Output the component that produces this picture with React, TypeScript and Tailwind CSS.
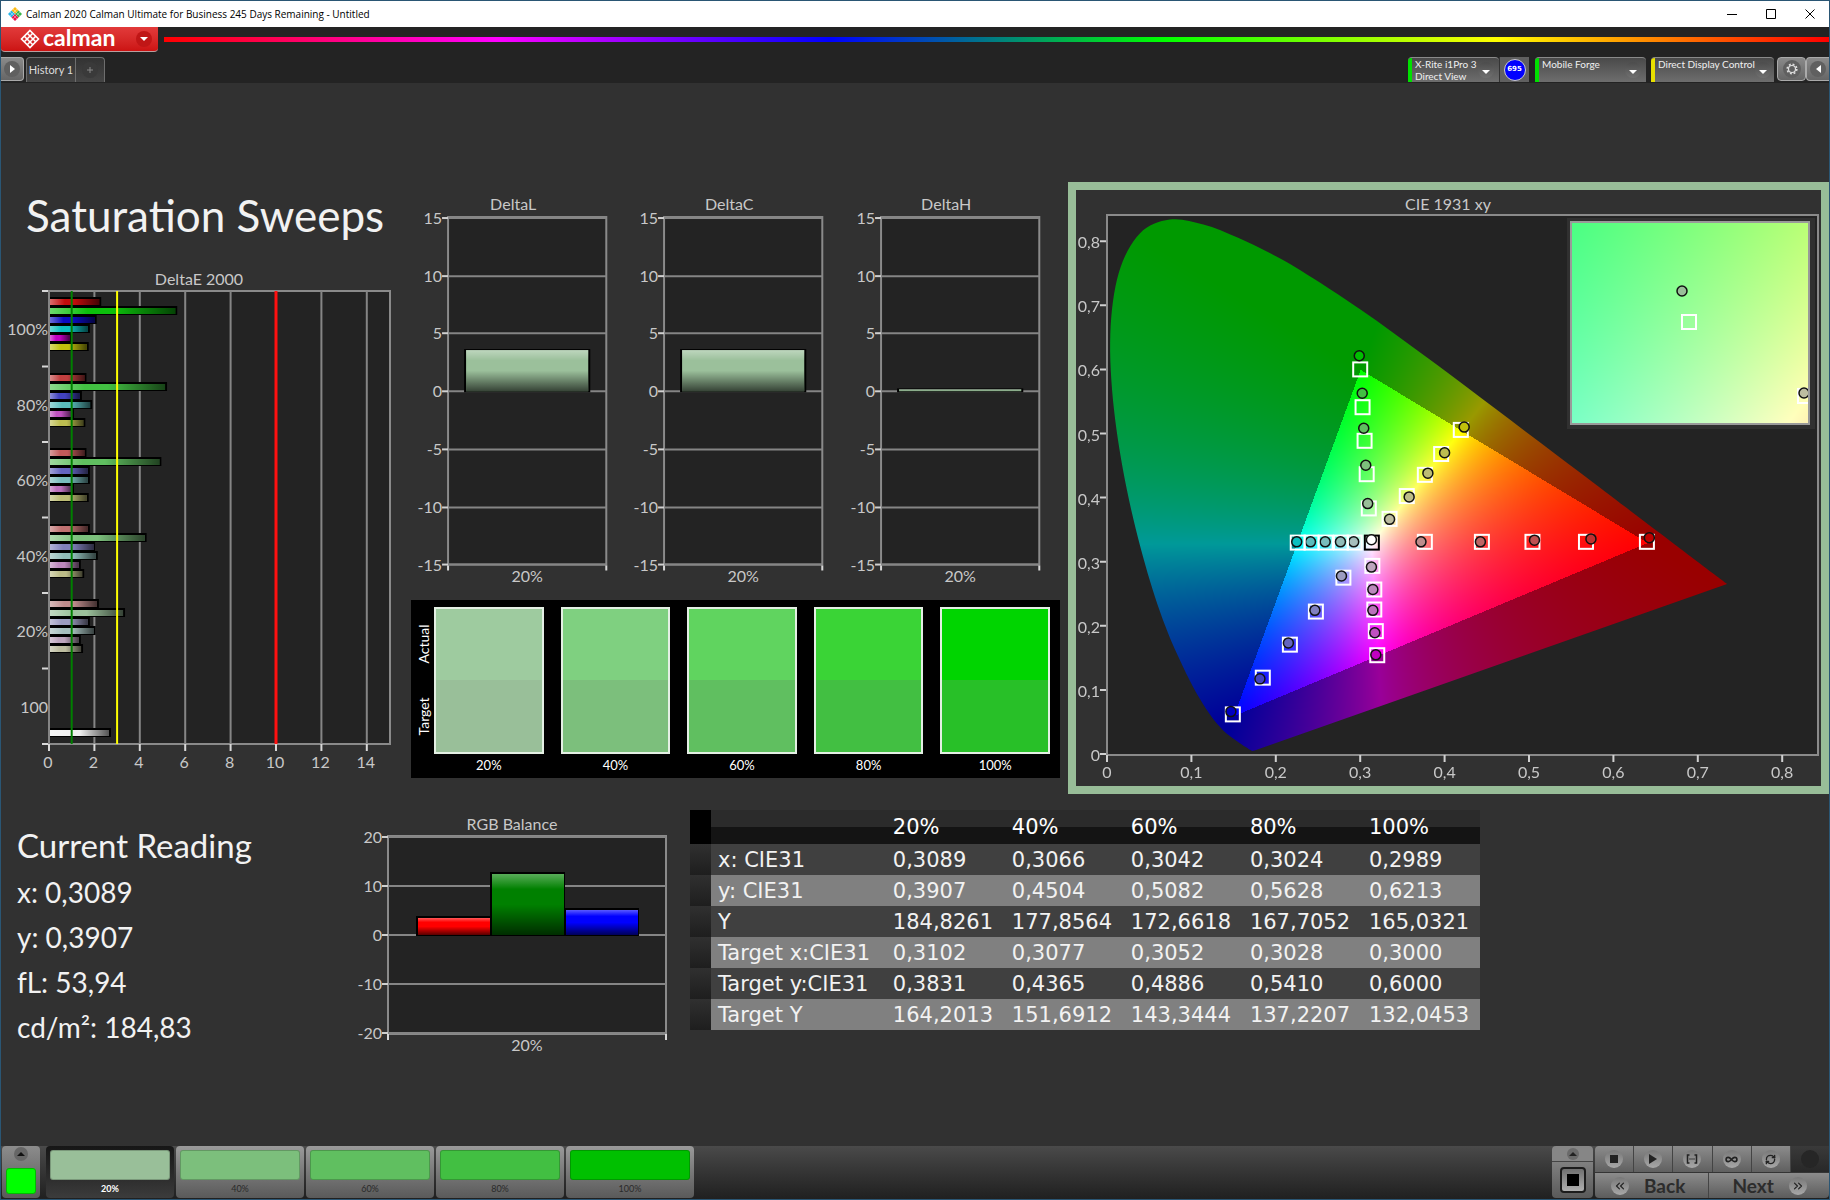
import { useEffect, useRef } from 'react';
import { Infinity as InfinityIcon, RefreshCw, ChevronsLeft, ChevronsRight } from 'lucide-react';

type Point = [number, number];

const levels = ['20%', '40%', '60%', '80%', '100%'];

const deltaE = [
  {
    label: '100%',
    bars: [
      { value: 2.3, color: '#c20c0c' },
      { value: 5.65, color: '#0cc00c' },
      { value: 2.1, color: '#0c0cc0' },
      { value: 1.8, color: '#0cbfbf' },
      { value: 1, color: '#c000c0' },
      { value: 1.75, color: '#c0c00c' },
    ],
  },
  {
    label: '80%',
    bars: [
      { value: 1.65, color: '#c23f3f' },
      { value: 5.2, color: '#42c042' },
      { value: 1.45, color: '#4242c0' },
      { value: 1.9, color: '#5abcbc' },
      { value: 1.1, color: '#c050c0' },
      { value: 1.6, color: '#bcbc50' },
    ],
  },
  {
    label: '60%',
    bars: [
      { value: 1.65, color: '#c25a5a' },
      { value: 4.95, color: '#60bf60' },
      { value: 1.8, color: '#6464c0' },
      { value: 1.8, color: '#78bcbc' },
      { value: 1.1, color: '#bc70bc' },
      { value: 1.75, color: '#bcbc74' },
    ],
  },
  {
    label: '40%',
    bars: [
      { value: 1.8, color: '#bf7070' },
      { value: 4.3, color: '#7cc07c' },
      { value: 2.05, color: '#8080bc' },
      { value: 2.15, color: '#90bcb8' },
      { value: 1.4, color: '#bc88bc' },
      { value: 1.55, color: '#bcbc88' },
    ],
  },
  {
    label: '20%',
    bars: [
      { value: 2.2, color: '#bf8c8c' },
      { value: 3.35, color: '#9bc09b' },
      { value: 1.8, color: '#9c9cc0' },
      { value: 2.05, color: '#a5bfbd' },
      { value: 1.4, color: '#bda5bd' },
      { value: 1.5, color: '#bdbda0' },
    ],
  },
];

const deltas = [
  { title: 'DeltaL', value: 3.65 },
  { title: 'DeltaC', value: 3.65 },
  { title: 'DeltaH', value: 0.25 },
];

const rgbBalance = [
  { value: 3.9, color: '#ff0000' },
  { value: 12.8, color: '#008000' },
  { value: 5.5, color: '#0000ff' },
];

const swatches = [
  { label: '20%', actual: '#9ecb9f', target: '#99bf99' },
  { label: '40%', actual: '#7fd080', target: '#7cbf7c' },
  { label: '60%', actual: '#60d45f', target: '#60bf60' },
  { label: '80%', actual: '#3ad436', target: '#42bf42' },
  { label: '100%', actual: '#00d500', target: '#28c028' },
];

const steps = ['#99bf99', '#7cbf7c', '#60bf60', '#42bf42', '#00c000'];

const readings = ['x: 0,3089', 'y: 0,3907', 'fL: 53,94', 'cd/m²: 184,83'];

const tableRows = [
  { label: 'x: CIE31', values: ['0,3089', '0,3066', '0,3042', '0,3024', '0,2989'] },
  { label: 'y: CIE31', values: ['0,3907', '0,4504', '0,5082', '0,5628', '0,6213'] },
  { label: 'Y', values: ['184,8261', '177,8564', '172,6618', '167,7052', '165,0321'] },
  { label: 'Target x:CIE31', values: ['0,3102', '0,3077', '0,3052', '0,3028', '0,3000'] },
  { label: 'Target y:CIE31', values: ['0,3831', '0,4365', '0,4886', '0,5410', '0,6000'] },
  { label: 'Target Y', values: ['164,2013', '151,6912', '143,3444', '137,2207', '132,0453'] },
];

// Spectral locus of the CIE 1931 observer
const locus: Point[] = [
  [0.1741, 0.005], [0.1714, 0.0051], [0.1644, 0.0109], [0.1566, 0.0177], [0.144, 0.0297],
  [0.1355, 0.0399], [0.1241, 0.0578], [0.1096, 0.0868], [0.0913, 0.1327], [0.0687, 0.2007],
  [0.0454, 0.295], [0.0235, 0.4127], [0.0082, 0.5384], [0.0039, 0.6548], [0.0139, 0.7502],
  [0.0389, 0.812], [0.0743, 0.8338], [0.1142, 0.8262], [0.1547, 0.8059], [0.1929, 0.7816],
  [0.2296, 0.7543], [0.3016, 0.6923], [0.3731, 0.6245], [0.4441, 0.5547], [0.5125, 0.4866],
  [0.5752, 0.4242], [0.627, 0.3725], [0.6658, 0.334], [0.6915, 0.3083], [0.719, 0.2809],
  [0.7347, 0.2653],
];

const sweeps: { target: Point; actual: Point; color: string }[] = [
  { target: [0.3766, 0.331], actual: [0.372, 0.331], color: '#bf8c8c' },
  { target: [0.4442, 0.331], actual: [0.4424, 0.331], color: '#bf6464' },
  { target: [0.5041, 0.331], actual: [0.5065, 0.3336], color: '#bf5050' },
  { target: [0.5675, 0.331], actual: [0.5734, 0.3356], color: '#bf3030' },
  { target: [0.6397, 0.331], actual: [0.6426, 0.3375], color: '#c00000' },
  { target: [0.3102, 0.3831], actual: [0.3089, 0.3907], color: '#99bf99' },
  { target: [0.3077, 0.4365], actual: [0.3066, 0.4504], color: '#7cbf7c' },
  { target: [0.3052, 0.4886], actual: [0.3042, 0.5082], color: '#60bf60' },
  { target: [0.3028, 0.541], actual: [0.3024, 0.5628], color: '#42bf42' },
  { target: [0.3, 0.6], actual: [0.2989, 0.6213], color: '#00c000' },
  { target: [0.2801, 0.2751], actual: [0.2778, 0.2776], color: '#9c9cc0' },
  { target: [0.2475, 0.2222], actual: [0.2463, 0.2241], color: '#8080c0' },
  { target: [0.2167, 0.1706], actual: [0.2149, 0.1732], color: '#6464c0' },
  { target: [0.1846, 0.1191], actual: [0.1812, 0.1172], color: '#4242c0' },
  { target: [0.1491, 0.0618], actual: [0.1468, 0.0662], color: '#0000c0' },
  { target: [0.2934, 0.3298], actual: [0.2923, 0.331], color: '#a5bfbd' },
  { target: [0.2772, 0.3298], actual: [0.2766, 0.331], color: '#90bcb8' },
  { target: [0.2591, 0.3298], actual: [0.2585, 0.331], color: '#78bcbc' },
  { target: [0.2423, 0.3298], actual: [0.2411, 0.331], color: '#5abcbc' },
  { target: [0.226, 0.3298], actual: [0.2248, 0.331], color: '#0cbfbf' },
  { target: [0.3144, 0.2935], actual: [0.3133, 0.2916], color: '#bda5bd' },
  { target: [0.3167, 0.2566], actual: [0.315, 0.2566], color: '#bc88bc' },
  { target: [0.3167, 0.2254], actual: [0.315, 0.2241], color: '#bc70bc' },
  { target: [0.3185, 0.1917], actual: [0.3173, 0.1891], color: '#c050c0' },
  { target: [0.3202, 0.1541], actual: [0.3185, 0.1547], color: '#c000c0' },
  { target: [0.3348, 0.3668], actual: [0.3348, 0.3661], color: '#bdbda0' },
  { target: [0.3552, 0.4024], actual: [0.358, 0.4011], color: '#bcbc88' },
  { target: [0.3766, 0.4355], actual: [0.3802, 0.4381], color: '#bcbc74' },
  { target: [0.3959, 0.468], actual: [0.4, 0.4699], color: '#bcbc50' },
  { target: [0.4192, 0.5056], actual: [0.4232, 0.51], color: '#c0c00c' },
];

const gamutWidth = 711;
const gamutHeight = 540;
const gx = (x: number) => x * 844;
const gy = (y: number) => gamutHeight - 1 - y * 641;

function chromaColor(x: number, y: number) {
  const X = x / y;
  const Z = (1 - x - y) / y;
  const rgb = [
    3.2406 * X - 1.5372 - 0.4986 * Z,
    -0.9689 * X + 1.8758 + 0.0415 * Z,
    0.0557 * X - 0.204 + 1.057 * Z,
  ];
  const max = Math.max(...rgb);
  const dim = Math.min(...rgb) < 0 ? 0.6 : 1;
  return rgb.map((c) => (255 * dim * Math.max(c, 0)) / max);
}

function fillChroma(
  ctx: CanvasRenderingContext2D,
  width: number,
  height: number,
  toXy: (px: number, py: number) => Point
) {
  const image = ctx.createImageData(width, height);
  for (let py = 0; py < height; py++) {
    for (let px = 0; px < width; px++) {
      const [x, y] = toXy(px, py);
      const [r, g, b] = chromaColor(x, Math.max(y, 0.0001));
      const i = (py * width + px) * 4;
      image.data[i] = r;
      image.data[i + 1] = g;
      image.data[i + 2] = b;
      image.data[i + 3] = 255;
    }
  }
  ctx.putImageData(image, 0, 0);
}

const Gamut = () => {
  const ref = useRef<HTMLCanvasElement>(null);

  useEffect(() => {
    const ctx = ref.current!.getContext('2d')!;
    const buffer = document.createElement('canvas');
    buffer.width = gamutWidth;
    buffer.height = gamutHeight;
    fillChroma(buffer.getContext('2d')!, gamutWidth, gamutHeight, (px, py) => [
      px / 844,
      (gamutHeight - 1 - py) / 641,
    ]);

    const pts = locus.map(([x, y]) => [gx(x), gy(y)]);
    ctx.clearRect(0, 0, gamutWidth, gamutHeight);
    ctx.save();
    ctx.beginPath();
    ctx.moveTo(pts[0][0], pts[0][1]);
    for (let i = 0; i < pts.length - 1; i++) {
      const p0 = pts[Math.max(i - 1, 0)];
      const p1 = pts[i];
      const p2 = pts[i + 1];
      const p3 = pts[Math.min(i + 2, pts.length - 1)];
      ctx.bezierCurveTo(
        p1[0] + (p2[0] - p0[0]) / 6,
        p1[1] + (p2[1] - p0[1]) / 6,
        p2[0] - (p3[0] - p1[0]) / 6,
        p2[1] - (p3[1] - p1[1]) / 6,
        p2[0],
        p2[1]
      );
    }
    ctx.closePath();
    ctx.clip();
    ctx.drawImage(buffer, 0, 0);
    ctx.restore();
  }, []);

  return <canvas ref={ref} width={gamutWidth} height={gamutHeight} className="block" />;
};

const GamutZoom = () => {
  const ref = useRef<HTMLCanvasElement>(null);

  useEffect(() => {
    fillChroma(ref.current!.getContext('2d')!, 238, 202, (px, py) => [
      0.3102 + (px - 119) / 4800,
      0.3831 - (py - 101) / 4060,
    ]);
  }, []);

  return <canvas ref={ref} width={238} height={202} className="block" />;
};

const Gradients = () => (
  <svg width="0" height="0" className="absolute" aria-hidden="true">
    <defs>
      <linearGradient id="shadeX">
        <stop offset="0" stopColor="#fff" stopOpacity="0.4" />
        <stop offset="0.3" stopColor="#fff" stopOpacity="0" />
        <stop offset="0.5" stopColor="#000" stopOpacity="0" />
        <stop offset="1" stopColor="#000" stopOpacity="0.65" />
      </linearGradient>
      <linearGradient id="shadeY" x2="0" y2="1">
        <stop offset="0" stopColor="#fff" stopOpacity="0.35" />
        <stop offset="0.25" stopColor="#fff" stopOpacity="0" />
        <stop offset="0.5" stopColor="#000" stopOpacity="0" />
        <stop offset="1" stopColor="#000" stopOpacity="0.65" />
      </linearGradient>
    </defs>
  </svg>
);

const DeltaEChart = () => {
  const left = 48;
  const top = 29;
  const bottom = 482;
  const group = 75.5;
  const sx = (v: number) => left + v * 22.7;

  return (
    <svg viewBox="0 0 410 520" className="block w-full h-auto text-[16px]" fill="#c8c8c8">
      <text x="198" y="23" textAnchor="middle">DeltaE 2000</text>
      <rect x={left} y={top} width="341" height={bottom - top} fill="#232323" stroke="#8a8a8a" strokeWidth="2" />
      {[0, 2, 4, 6, 8, 10, 12, 14].map((v) => (
        <g key={v}>
          <path d={`M${sx(v)} ${top}V${bottom}`} stroke="#858585" strokeWidth="2" />
          <path d={`M${sx(v)} ${bottom}v7`} stroke="#d8d8d8" strokeWidth="2" />
          <text x={sx(v) - 1} y={bottom + 24} textAnchor="middle">{v}</text>
        </g>
      ))}
      {[0, 1, 2, 3, 4, 5, 6].map((i) => (
        <path key={i} d={`M${left - 7} ${top + i * group}h6`} stroke="#d8d8d8" strokeWidth="2" />
      ))}
      {deltaE.map((set, g) => (
        <g key={set.label}>
          <text x={left - 1} y={top + g * group + 44} textAnchor="end">{set.label}</text>
          {set.bars.map((bar, i) => {
            const y = Math.round(top + g * group + 7 + i * 9);
            const w = bar.value * 22.7 - 2;
            return (
              <g key={bar.color}>
                <rect x={left + 1} y={y - 1} width={w + 1} height="9" fill="#000" />
                <rect x={left + 1} y={y + 1} width={w - 1} height="6" fill={bar.color} />
                <rect x={left + 1} y={y + 1} width={w - 1} height="6" fill="url(#shadeX)" />
              </g>
            );
          })}
        </g>
      ))}
      <text x={left - 1} y={top + 5 * group + 44} textAnchor="end">100</text>
      <rect x={left + 1} y="466" width="61" height="9" fill="#000" />
      <rect x={left + 1} y="468" width="59" height="6" fill="#f0f0f0" />
      <rect x={left + 1} y="468" width="59" height="6" fill="url(#shadeX)" />
      <path d={`M${sx(1)} ${top}V${bottom}`} stroke="#008000" strokeWidth="2" />
      <path d={`M${sx(3)} ${top}V${bottom}`} stroke="#ffff00" strokeWidth="2" />
      <path d={`M${sx(10)} ${top}V${bottom}`} stroke="#ff1010" strokeWidth="3" />
    </svg>
  );
};

const DeltaChart = ({ title, value }: { title: string; value: number }) => {
  const zero = 191;
  const unit = 11.55;
  const height = value * unit;

  return (
    <svg viewBox="0 -10 216 409" className="block flex-1 min-w-0 h-auto text-[16px]" fill="#c8c8c8">
      <text x="102" y="10" textAnchor="middle">{title}</text>
      <rect x="37" y="17" width="158" height="347" fill="#232323" stroke="#8a8a8a" strokeWidth="2" />
      {[15, 10, 5, 0, -5, -10, -15].map((v) => {
        const y = Math.round(zero - v * unit);
        return (
          <g key={v}>
            <path d={`M37 ${y}h158`} stroke="#858585" strokeWidth="2" />
            <path d={`M31 ${y}h6`} stroke="#d0d0d0" strokeWidth="2" />
            <text x="31" y={y + 6} textAnchor="end">{v}</text>
          </g>
        );
      })}
      <path d="M37 365v5M195 365v5" stroke="#d8d8d8" strokeWidth="2" />
      <rect x="53" y={zero - height} width="126" height={height + 1} fill="#000" />
      <rect x="55" y={zero - height + 1} width="122" height={height - 1} fill="#9bc09b" />
      <rect x="55" y={zero - height + 1} width="122" height={height - 1} fill="url(#shadeY)" />
      <text x="116" y="381" textAnchor="middle">20%</text>
    </svg>
  );
};

const RgbBalanceChart = () => {
  const zero = 125;
  const unit = 4.92;

  return (
    <svg viewBox="0 0 340 250" className="block w-full h-auto text-[16px]" fill="#c8c8c8">
      <text x="162" y="20" textAnchor="middle">RGB Balance</text>
      <rect x="38" y="26" width="278" height="198" fill="#232323" stroke="#8a8a8a" strokeWidth="2" />
      {[20, 10, 0, -10, -20].map((v) => {
        const y = Math.round(zero - v * unit);
        return (
          <g key={v}>
            <path d={`M38 ${y}h278`} stroke="#858585" strokeWidth="2" />
            <path d={`M32 ${y}h6`} stroke="#d0d0d0" strokeWidth="2" />
            <text x="32" y={y + 6} textAnchor="end">{v}</text>
          </g>
        );
      })}
      <path d="M38 224v6M316 224v6" stroke="#d8d8d8" strokeWidth="2" />
      {rgbBalance.map((bar, i) => {
        const h = Math.round(bar.value * unit);
        const x = 66 + i * 74;
        return (
          <g key={bar.color}>
            <rect x={x} y={zero - h} width="75" height={h + 1} fill="#000" />
            <rect x={x + 2} y={zero - h + 2} width="72" height={h - 2} fill={bar.color} />
            <rect x={x + 2} y={zero - h + 2} width="72" height={h - 2} fill="url(#shadeY)" />
          </g>
        );
      })}
      <text x="177" y="241" textAnchor="middle">20%</text>
    </svg>
  );
};

const CieChart = () => {
  const ox = 31;
  const oy = 25;
  const px = (x: number) => ox + gx(x);
  const py = (y: number) => oy + gy(y);

  return (
    <svg viewBox="0 0 745 596" className="block w-full h-auto text-[16px]" fill="#c8c8c8">
      <text x="372" y="20" textAnchor="middle">CIE 1931 xy</text>
      <rect x={ox} y={oy} width={gamutWidth} height={gamutHeight} fill="#232323" />
      <foreignObject x={ox} y={oy} width={gamutWidth} height={gamutHeight}>
        <Gamut />
      </foreignObject>
      <rect x={ox} y={oy} width={gamutWidth} height={gamutHeight} fill="none" stroke="#8a8a8a" strokeWidth="2" />
      {[0, 1, 2, 3, 4, 5, 6, 7, 8].map((i) => (
        <g key={i}>
          <path
            d={`M${px(i / 10)} ${oy + gamutHeight}v7M${ox - 7} ${py(i / 10)}h6`}
            stroke="#d0d0d0"
            strokeWidth="2"
          />
          <text x={px(i / 10)} y={oy + gamutHeight + 23} textAnchor="middle">{i ? `0,${i}` : '0'}</text>
          <text x={ox - 7} y={py(i / 10) + 7} textAnchor="end">{i ? `0,${i}` : '0'}</text>
        </g>
      ))}
      {sweeps.map(({ target, actual, color }) => (
        <g key={color + target[0]}>
          <rect
            x={px(target[0]) - 7}
            y={py(target[1]) - 7}
            width="14"
            height="14"
            fill="none"
            stroke="#fff"
            strokeWidth="2"
          />
          <circle cx={px(actual[0])} cy={py(actual[1])} r="5" fill={color} stroke="#111" strokeWidth="1.5" />
        </g>
      ))}
      <rect x={px(0.3138) - 7} y={py(0.3298) - 7} width="14" height="14" fill="none" stroke="#000" strokeWidth="2" />
      <circle cx={px(0.3133)} cy={py(0.3343)} r="5" fill="#fff" stroke="#111" strokeWidth="1.5" />

      <rect x="491" y="28" width="248" height="211" fill="#303030" />
      <svg x="494" y="31" width="240" height="204" viewBox="0 0 240 204">
        <foreignObject x="1" y="1" width="238" height="202">
          <GamutZoom />
        </foreignObject>
        <rect x="112" y="94" width="14" height="14" fill="none" stroke="#fff" strokeWidth="2" />
        <circle cx="112" cy="70" r="5" fill="#99bf99" stroke="#111" strokeWidth="1.5" />
        <rect x="228" y="168" width="14" height="14" fill="none" stroke="#fff" strokeWidth="2" />
        <circle cx="234" cy="172" r="5" fill="#bdbda0" stroke="#111" strokeWidth="1.5" />
        <rect x="1" y="1" width="238" height="202" fill="none" stroke="#9a9a9a" strokeWidth="2" />
      </svg>
    </svg>
  );
};

const Caret = () => (
  <span className="flex h-4 w-4 shrink-0 items-center justify-center rounded-full bg-gradient-to-b from-[#4c4c4c] to-[#707070]">
    <svg width="8" height="4" viewBox="0 0 8 4" className="mt-1">
      <path d="M0 0h8L4 4z" fill="#fff" />
    </svg>
  </span>
);

const Round = ({ children }: { children?: React.ReactNode }) => (
  <span className="flex h-[18px] w-[18px] items-center justify-center rounded-full bg-gradient-to-b from-[#787878] to-[#a8a8a8] text-[#222]">
    {children}
  </span>
);

const DeviceTab = ({ lines, mark }: { lines: string[]; mark: string }) => (
  <button className="flex min-w-0 flex-1 overflow-hidden rounded-t-[4px] border-t border-[#8a8a8a] bg-gradient-to-b from-[#4a4a4a] to-[#6e6e6e] text-left">
    <span className={`w-1 shrink-0 self-stretch ${mark}`} />
    <span className="flex-1 pl-[3px] text-[10px] leading-3 whitespace-nowrap text-[#f0f0f0]">
      {lines.map((line) => (
        <span key={line} className="block">{line}</span>
      ))}
    </span>
    <span className="mt-1 mr-[5px]">
      <Caret />
    </span>
  </button>
);

const TitleBar = () => (
  <header className="flex h-[26px] items-center bg-white pl-[7px] font-['Open_Sans','Noto_Sans',sans-serif] text-black">
    <svg width="14" height="14" viewBox="0 0 14 14" className="mr-1">
      <path d="M7 0l3.500 3.500L7 7 3.500 3.500z" fill="#fdbb12" />
      <path d="M3.500 3.500L7 7l-3.500 3.500L0 7z" fill="#27b5ea" />
      <path d="M10.500 3.500L14 7l-3.500 3.500L7 7z" fill="#3bb54a" />
      <path d="M7 7l3.500 3.500L7 14l-3.500-3.500z" fill="#e8174b" />
      <path d="M5 2l7 7M2 5l7 7M9 2l-7 7M12 5l-7 7" stroke="#fff" strokeWidth="0.5" opacity="0.8" />
    </svg>
    <h1 className="text-[10px]">Calman 2020 Calman Ultimate for Business 245 Days Remaining - Untitled</h1>
    <div className="ml-auto flex">
      <button aria-label="Minimize" className="flex h-6 w-[39px] items-center justify-center">
        <svg width="10" height="10" viewBox="0 0 10 10"><path d="M0 5.500h10" stroke="#000" /></svg>
      </button>
      <button aria-label="Maximize" className="flex h-6 w-[39px] items-center justify-center">
        <svg width="10" height="10" viewBox="0 0 10 10"><path d="M.5.500h9v9h-9z" fill="none" stroke="#000" /></svg>
      </button>
      <button aria-label="Close" className="flex h-6 w-[39px] items-center justify-center">
        <svg width="10" height="10" viewBox="0 0 10 10"><path d="M.5.500l9 9M9.500.500l-9 9" stroke="#000" /></svg>
      </button>
    </div>
  </header>
);

const Toolbar = () => (
  <div className="bg-[#232323]">
    <div className="flex h-[25px] items-center">
      <button className="flex h-[25px] w-[157px] items-center rounded-b-[4px] border-b border-[#b9a0a0] bg-gradient-to-b from-[#e23a3a] to-[#cc1212] pl-[19px] text-white">
        <svg width="20" height="20" viewBox="0 0 20 20" fill="none" stroke="#fff" strokeWidth="1.600">
          <path d="M10 1.500l8.500 8.500L10 18.500 1.500 10z" />
          <path d="M7.200 4.300l8.500 8.500M4.300 7.200l8.500 8.500M12.800 4.300l-8.500 8.500M15.700 7.200l-8.500 8.500" />
        </svg>
        <span className="ml-[3px] pb-1 text-[23px] leading-5 font-bold">calman</span>
        <span className="mr-[6px] ml-auto flex h-4 w-4 items-center justify-center rounded-full bg-[#c01616]">
          <svg width="8" height="4" viewBox="0 0 8 4"><path d="M0 0h8L4 4z" fill="#fff" /></svg>
        </span>
      </button>
      <div className="ml-[6px] h-[5px] flex-1 bg-[linear-gradient(to_right,#f00,#f0f_20%,#00f_40%,#0f0_60%,#ff0_80%,#f00)]" />
    </div>
    <div className="flex h-[31px] items-end pb-px">
      <button aria-label="Expand" className="mb-px flex h-6 w-[23px] items-center justify-center rounded-r-[4px] border border-l-0 border-[#aaa] bg-gradient-to-b from-[#8a8a8a] to-[#666]">
        <span className="flex h-4 w-4 items-center justify-center rounded-full bg-[#606060]">
          <svg width="5" height="8" viewBox="0 0 5 8"><path d="M0 0v8l5-4z" fill="#fff" /></svg>
        </span>
      </button>
      <div className="ml-[2px] flex h-[25px] rounded-t-[4px] border border-b-0 border-[#6e6e6e] bg-gradient-to-b from-[#333] to-[#454545]">
        <button className="w-[49px] border-r border-[#6e6e6e] text-[11px] text-[#ddd]">History 1</button>
        <button aria-label="Add tab" className="flex w-7 items-center justify-center text-[#888]">
          <span className="flex h-4 w-4 items-center justify-center rounded-full bg-[#3a3a3a]">
            <svg width="6" height="6" viewBox="0 0 6 6"><path d="M3 0v6M0 3h6" stroke="#888" /></svg>
          </span>
        </button>
      </div>
      <div className="ml-auto flex h-[25px]">
        <div className="mr-[6px] flex w-[121px]">
          <DeviceTab lines={['X-Rite i1Pro 3', 'Direct View']} mark="bg-[#00e000]" />
          <div className="flex w-[30px] items-center justify-center border-l border-[#333] bg-[#606060]">
            <span className="flex h-[22px] w-[22px] items-center justify-center rounded-full border border-[#ccc] bg-[#0000ff] font-['DejaVu_Sans',sans-serif] text-[7px] font-bold text-white">
              695
            </span>
          </div>
        </div>
        <div className="mr-[5px] flex w-[111px]">
          <DeviceTab lines={['Mobile Forge']} mark="bg-[#00e000]" />
        </div>
        <div className="mr-[3px] flex w-[123px]">
          <DeviceTab lines={['Direct Display Control']} mark="bg-[#e8e000]" />
        </div>
        <button aria-label="Settings" className="flex h-6 w-[29px] items-center justify-center rounded-[4px] border border-[#aaa] bg-gradient-to-b from-[#8a8a8a] to-[#666]">
          <span className="flex h-[18px] w-[18px] items-center justify-center rounded-full bg-[#606060]">
            <svg width="12" height="12" viewBox="0 0 12 12" fill="none" stroke="#e0e0e0">
              <circle cx="6" cy="6" r="3.500" strokeWidth="1.200" />
              <circle cx="6" cy="6" r="4.800" strokeWidth="1.600" strokeDasharray="1.900 1.870" />
            </svg>
          </span>
        </button>
        <button aria-label="Collapse" className="flex h-6 w-[23px] items-center justify-center rounded-l-[4px] border border-r-0 border-[#aaa] bg-gradient-to-b from-[#8a8a8a] to-[#666]">
          <span className="flex h-4 w-4 items-center justify-center rounded-full bg-[#606060]">
            <svg width="5" height="8" viewBox="0 0 5 8"><path d="M5 0v8L0 4z" fill="#fff" /></svg>
          </span>
        </button>
      </div>
    </div>
  </div>
);

const Swatches = () => (
  <div className="flex bg-black pt-[7px] pr-[10px] pl-[1px] text-white">
    <div className="flex h-[147px] w-[22px] flex-col text-[14px]">
      <span className="flex flex-1 rotate-180 items-center justify-center [writing-mode:vertical-rl]">Actual</span>
      <span className="flex flex-1 rotate-180 items-center justify-center [writing-mode:vertical-rl]">Target</span>
    </div>
    <div className="grid flex-1 grid-cols-5 gap-[17px]">
      {swatches.map((s) => (
        <div key={s.label}>
          <div className="flex h-[147px] flex-col border-2 border-[#e4efe4]">
            <span className="flex-1" style={{ backgroundColor: s.actual }} />
            <span className="flex-1" style={{ backgroundColor: s.target }} />
          </div>
          <p className="h-6 text-center text-[13px] leading-[22px]">{s.label}</p>
        </div>
      ))}
    </div>
  </div>
);

const ReadingsTable = () => (
  <table className="w-full table-fixed self-start border-collapse text-left font-['DejaVu_Sans',sans-serif] text-[21px] leading-[30px] text-[#f2f2f2]">
    <colgroup>
      <col className="w-[21px]" />
      <col className="w-[22%]" />
      <col span={5} />
    </colgroup>
    <thead>
      <tr className="h-[34px] bg-[linear-gradient(#2b2b2b_50%,#141414_50%)]">
        <td className="bg-black" />
        <td />
        {levels.map((l) => (
          <th key={l} scope="col" className="pl-2 font-normal text-white">{l}</th>
        ))}
      </tr>
    </thead>
    <tbody>
      {tableRows.map((row) => (
        <tr key={row.label} className="h-[31px] odd:bg-[#404040] even:bg-[#808080]">
          <td className="bg-gradient-to-b from-[#303030] to-[#1e1e1e]" />
          <th scope="row" className="pl-[7px] font-normal whitespace-nowrap">{row.label}</th>
          {row.values.map((v) => (
            <td key={v} className="pl-2">{v}</td>
          ))}
        </tr>
      ))}
    </tbody>
  </table>
);

const Footer = () => {
  const key = 'flex flex-1 items-center justify-center border-r border-[#444] bg-gradient-to-b from-[#8c8c8c] to-[#606060]';

  return (
    <footer className="flex h-[53px] bg-gradient-to-b from-[#4a4a4a] to-[#202020] pb-px pl-px">
      <button aria-label="Pattern" className="mr-[6px] flex w-[38px] flex-col items-center rounded-[4px] bg-gradient-to-b from-[#8c8c8c] to-[#5a5a5a]">
        <span className="mt-px flex h-[14px] w-[14px] items-center justify-center rounded-full bg-[#666]">
          <svg width="8" height="4" viewBox="0 0 8 4"><path d="M0 4h8L4 0z" fill="#111" /></svg>
        </span>
        <span className="mt-[7px] h-[26px] w-[30px] rounded-[3px] border border-[#0b0] bg-[#00ff00]" />
      </button>
      <div className="flex gap-[2px]">
        {levels.map((label, i) => (
          <button
            key={label}
            className={
              i === 0
                ? 'flex w-32 flex-col rounded-[4px] bg-gradient-to-b from-[#161616] to-[#3c3c3c] px-1 pt-1 font-bold text-white'
                : 'flex w-32 flex-col rounded-[4px] bg-gradient-to-b from-[#9a9a9a] to-[#5a5a5a] px-1 pt-1 text-[#2a2a2a]'
            }
          >
            <span className="h-[31px] w-full rounded-[3px] border border-black/20" style={{ backgroundColor: steps[i] }} />
            <span className="w-full text-center text-[9px] leading-[18px]">{label}</span>
          </button>
        ))}
      </div>
      <div className="mr-[2px] ml-auto flex w-[41px] flex-col">
        <button aria-label="Open meter panel" className="flex h-4 items-center justify-center rounded-t-[4px] border-b border-[#444] bg-[#868686]">
          <span className="flex h-3 w-3 items-center justify-center rounded-full bg-[#6a6a6a]">
            <svg width="8" height="4" viewBox="0 0 8 4"><path d="M0 4h8L4 0z" fill="#222" /></svg>
          </span>
        </button>
        <button aria-label="Stop" className="flex flex-1 items-center justify-center rounded-b-[4px] bg-gradient-to-b from-[#808080] to-[#5a5a5a]">
          <span className="flex h-[26px] w-[26px] items-center justify-center rounded-[4px] border-2 border-[#1c1c1c] bg-gradient-to-b from-[#707070] to-[#b0b0b0]">
            <span className="h-3 w-3 bg-black" />
          </span>
        </button>
      </div>
      <div className="flex w-[234px] flex-col">
        <div className="flex h-[26px]">
          <button aria-label="Stop reading" className={`${key} rounded-tl-[4px]`}>
            <Round><span className="h-2 w-2 bg-[#222]" /></Round>
          </button>
          <button aria-label="Read" className={key}>
            <Round><svg width="8" height="10" viewBox="0 0 8 10"><path d="M0 0v10l8-5z" fill="#222" /></svg></Round>
          </button>
          <button aria-label="Read series" className={key}>
            <Round>
              <svg width="12" height="10" viewBox="0 0 12 10" fill="none" stroke="#222" strokeWidth="1.500">
                <path d="M3.500 1h-2v8h2M8.500 1h2v8h-2M3.500 5h1M5.500 5h1M7.500 5h1" />
              </svg>
            </Round>
          </button>
          <button aria-label="Read continuously" className={key}>
            <Round><InfinityIcon size={13} strokeWidth={3} /></Round>
          </button>
          <button aria-label="Repeat" className={key}>
            <Round><RefreshCw size={11} strokeWidth={3} /></Round>
          </button>
          <span className="flex flex-1 items-center justify-center bg-gradient-to-b from-[#3a3a3a] to-[#282828]">
            <span className="h-[18px] w-[18px] rounded-full bg-[#262626]" />
          </span>
        </div>
        <div className="mt-px flex flex-1 text-[19px] leading-none font-bold text-[#2c2c2c]">
          <button className="flex flex-1 items-center gap-[15px] rounded-bl-[4px] border-r border-[#444] bg-gradient-to-b from-[#8c8c8c] to-[#5c5c5c] pl-4">
            <Round><ChevronsLeft size={14} /></Round>
            Back
          </button>
          <button className="flex flex-1 items-center gap-[15px] rounded-br-[4px] bg-gradient-to-b from-[#8c8c8c] to-[#5c5c5c] pl-6">
            Next
            <Round><ChevronsRight size={14} /></Round>
          </button>
        </div>
      </div>
    </footer>
  );
};

export default function App() {
  return (
    <div className="flex min-h-screen flex-col border border-[#2a5674] bg-[#313131] font-['Lato','Open_Sans',sans-serif]">
      <Gradients />
      <TitleBar />
      <Toolbar />

      <main className="flex-1 pt-[99px]">
        <section className="grid grid-cols-[410fr_657fr_761fr]">
          <div>
            <h2 className="h-20 pl-[25px] text-[44px] leading-[66px] whitespace-nowrap text-[#f2f2f2]">
              Saturation Sweeps
            </h2>
            <DeltaEChart />
          </div>

          <div className="flex flex-col pt-2 pr-2">
            <div className="flex">
              {deltas.map((d) => (
                <DeltaChart key={d.title} {...d} />
              ))}
            </div>
            <Swatches />
          </div>

          <div className="self-start border-8 border-[#98bd98]">
            <CieChart />
          </div>
        </section>

        <section className="grid grid-cols-[349fr_340fr_790fr_349fr] pt-4">
          <div className="pt-[10px] pl-4 text-[#f2f2f2]">
            <h3 className="text-[33px] leading-[50px]">Current Reading</h3>
            {readings.map((r) => (
              <p key={r} className="text-[28px] leading-[45px]">{r}</p>
            ))}
          </div>
          <RgbBalanceChart />
          <ReadingsTable />
        </section>
      </main>

      <Footer />
    </div>
  );
}
